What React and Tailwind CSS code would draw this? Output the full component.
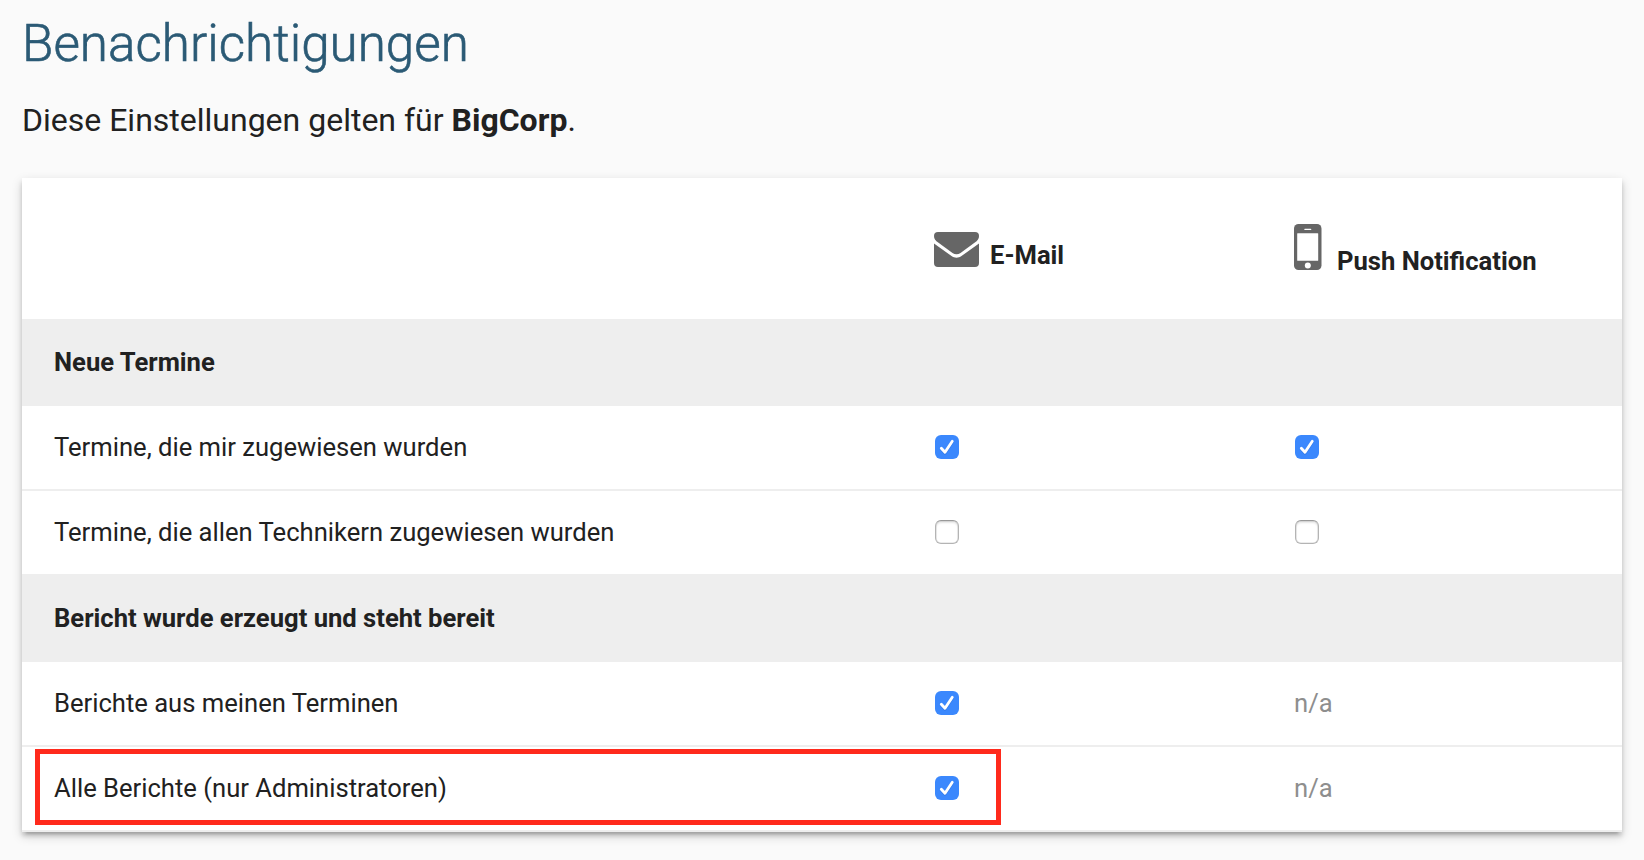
const groups = [
  {
    title: "Neue Termine",
    height: "h-[87px]",
    rows: [
      { label: "Termine, die mir zugewiesen wurden", email: true, push: true },
      {
        label: "Termine, die allen Technikern zugewiesen wurden",
        email: false,
        push: false,
      },
    ],
  },
  {
    title: "Bericht wurde erzeugt und steht bereit",
    height: "h-[86px]",
    rows: [
      { label: "Berichte aus meinen Terminen", email: true, push: null },
      {
        label: "Alle Berichte (nur Administratoren)",
        email: true,
        push: null,
        highlight: true,
      },
    ],
  },
];

function MailIcon() {
  return (
    <svg width="45" height="35" viewBox="0 0 45 35" fill="#666666">
      <path d="M4 0H41Q45 0 45 4C45 7 43.4 8.6 41.5 10L26.5 21C24 22.8 21 22.8 18.5 21L3.5 10C1.6 8.6 0 7 0 4Q0 0 4 0Z" />
      <path d="M0 11.5L17.5 24C20.5 26.2 24.5 26.2 27.5 24L45 11.5V31Q45 35 41 35H4Q0 35 0 31Z" />
    </svg>
  );
}

function PhoneIcon() {
  return (
    <svg width="28" height="46" viewBox="0 0 28 46">
      <rect width="27.5" height="46" rx="4.5" fill="#666666" />
      <rect x="3.2" y="9.3" width="21" height="27.5" rx="0.5" fill="white" />
      <rect x="10.3" y="4.8" width="7" height="1.3" rx="0.6" fill="white" />
      <circle cx="13.8" cy="41.5" r="3" fill="white" />
    </svg>
  );
}

function Checkbox({ checked }) {
  if (!checked) {
    return (
      <span
        role="checkbox"
        aria-checked="false"
        className="ml-px block w-6 h-6 rounded-[6px] border-[1.5px] border-[#b4b4b4] border-t-[#999999] bg-white shadow-[inset_0_2px_2px_rgba(0,0,0,0.1),inset_0_0_0_0.5px_rgba(0,0,0,0.15)]"
      />
    );
  }
  return (
    <span
      role="checkbox"
      aria-checked="true"
      className="ml-px block w-6 h-6 rounded-[6px] bg-[#3b88fd]"
    >
      <svg
        width="24"
        height="24"
        viewBox="0 0 24 24"
        fill="none"
        strokeLinecap="round"
        strokeLinejoin="round"
      >
        <path
          d="M6.3 14.2L10 18.3L17.3 7.3"
          stroke="#2c6fd8"
          strokeWidth="2.8"
          strokeOpacity="0.6"
        />
        <path d="M6.3 13.2L10 17.3L17.3 6.3" stroke="white" strokeWidth="2.8" />
      </svg>
    </span>
  );
}

function Channel({ value }) {
  if (value === null) return <span className="text-[#8e8e8e]">n/a</span>;
  return <Checkbox checked={value} />;
}

export default function App() {
  return (
    <div className="h-[860px] overflow-hidden bg-[#fafafa] px-[22px] pt-[13px] font-['Roboto',sans-serif] text-[#212121]">
      <h1 className="h-[62px] text-[51.2px] leading-[62px] font-light text-[#2b5a75] [-webkit-text-stroke:0.6px_#2b5a75]">
        Benachrichtigungen
      </h1>
      <p className="mt-[25px] h-10 text-[32px] leading-10">
        Diese Einstellungen gelten für <b className="font-bold">BigCorp</b>.
      </p>

      <div className="mt-[38px] w-[1600px] bg-white text-[25.6px] leading-[30px] shadow-[0_4px_4px_0_rgba(0,0,0,0.14),0_6px_2px_-4px_rgba(0,0,0,0.12),0_4px_10px_0_rgba(0,0,0,0.18)]">
        <div className="grid h-[141px] grid-cols-[880px_360px_1fr] pl-8 font-bold">
          <div />
          <div className="flex items-start pt-[54px]">
            <MailIcon />
            <span className="ml-[11px] pt-2">E-Mail</span>
          </div>
          <div className="flex items-start pt-[46px]">
            <PhoneIcon />
            <span className="ml-[15px] pt-[22px]">Push Notification</span>
          </div>
        </div>

        {groups.map((group) => (
          <div key={group.title}>
            <div
              className={`flex items-center bg-[#eeeeee] pb-0.5 pl-8 font-bold ${group.height}`}
            >
              {group.title}
            </div>
            {group.rows.map((row) => (
              <div
                key={row.label}
                className="relative grid h-[85px] grid-cols-[880px_360px_1fr] items-center border-b-2 border-[#eeeeee] pb-0.5 pl-8"
              >
                <span>{row.label}</span>
                <Channel value={row.email} />
                <Channel value={row.push} />
                {row.highlight && (
                  <div className="absolute top-0.5 left-[13px] h-[76px] w-[966px] border-[5px] border-[#ff2a1c]" />
                )}
              </div>
            ))}
          </div>
        ))}
      </div>
    </div>
  );
}
